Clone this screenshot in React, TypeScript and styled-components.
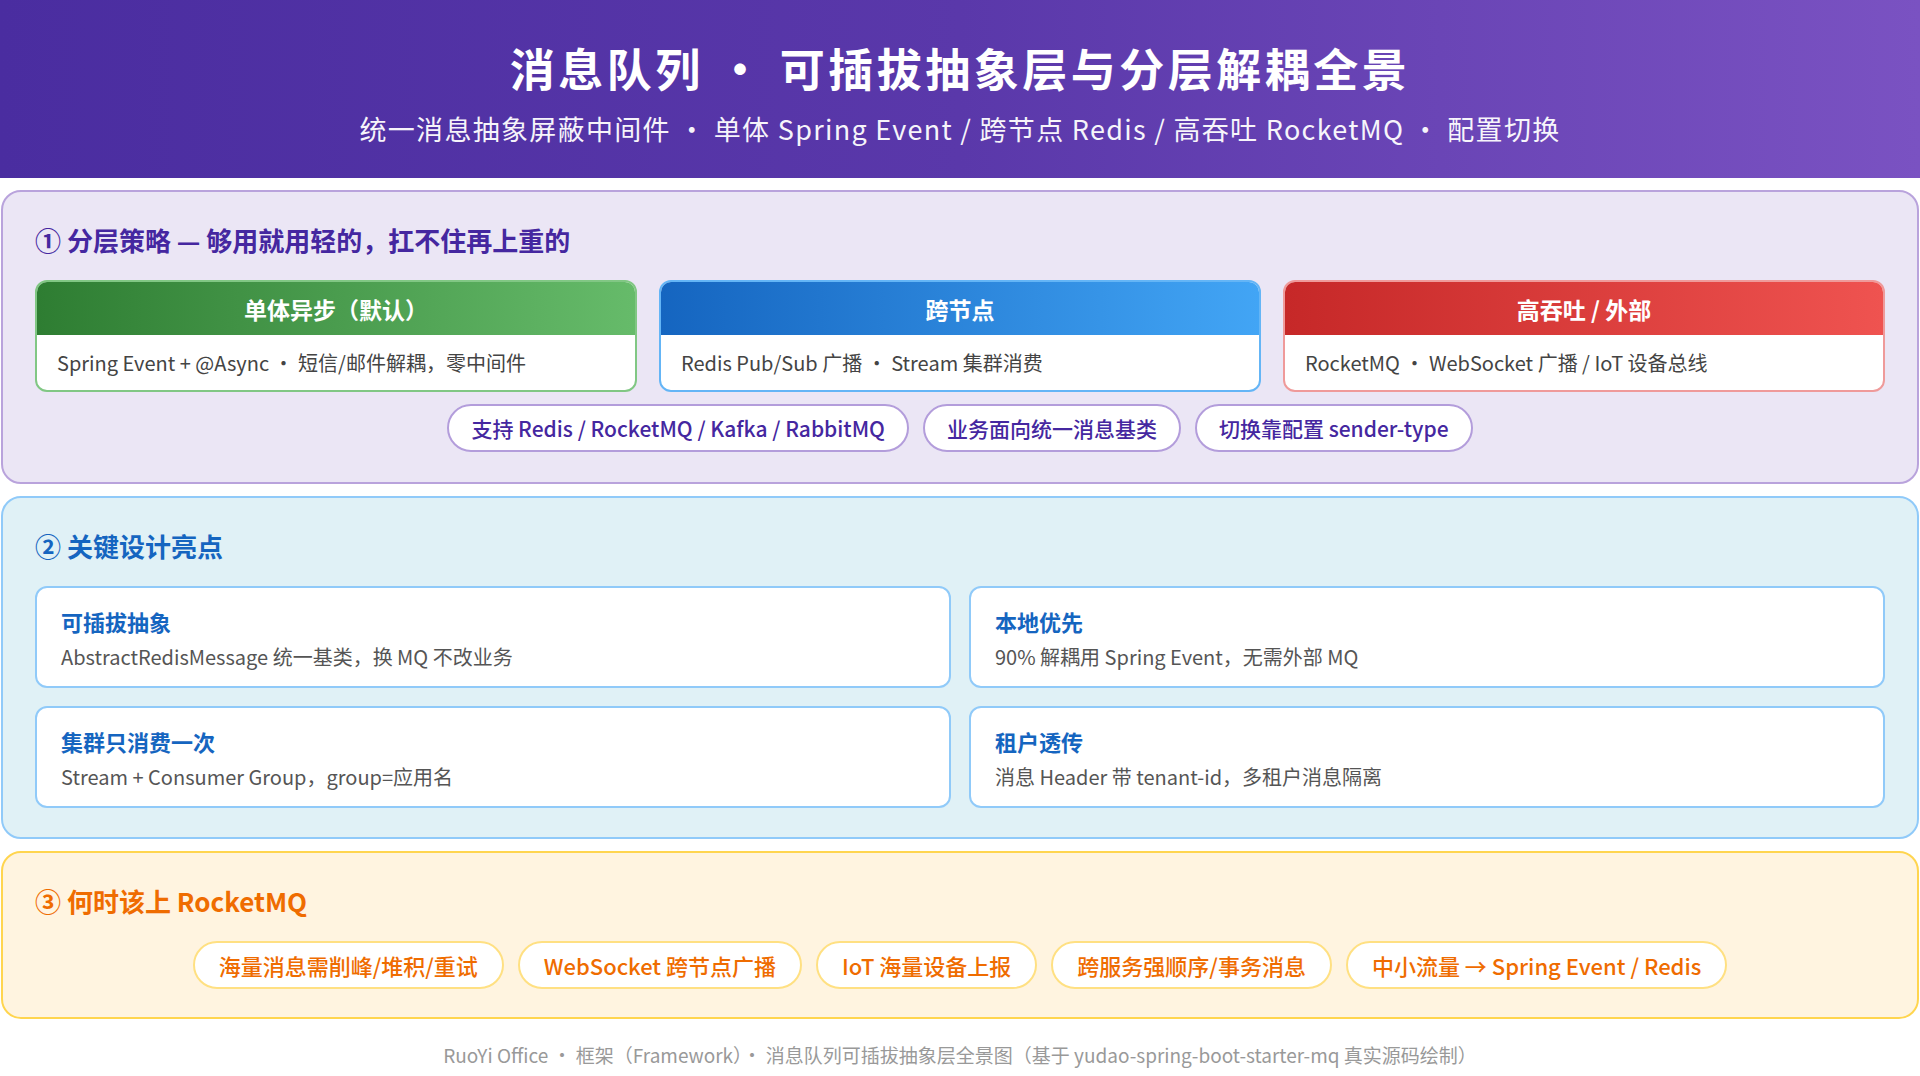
import React from "react";
import styled, { createGlobalStyle } from "styled-components";

const Global = createGlobalStyle`
  html, body { margin: 0; padding: 0; background: #fff; }
  body { font-family: "Noto Sans CJK SC", "Noto Sans", sans-serif; }
`;

const Page = styled.div`
  width: 1920px; height: 1076px; display: flex; flex-direction: column; overflow: hidden;
`;
const Header = styled.header`
  height: 178px; box-sizing: border-box; padding-top: 40px;
  background: linear-gradient(90deg, #4a2da0 0%, #5a38aa 50%, #7a52c2 100%);
  color: #fff; text-align: center;
`;
const Title = styled.h1`
  margin: 0; font-size: 45px; font-weight: 700; letter-spacing: 3.5px; line-height: 56px;
`;
const Sub = styled.div`
  margin-top: 16px; font-size: 27px; letter-spacing: 1.3px; opacity: 0.95; line-height: 34px;
`;
const Section = styled.section<{ $bg: string; $bd: string; $h: number }>`
  margin: 12px 1px 0; border: 2px solid ${p => p.$bd}; background: ${p => p.$bg};
  border-radius: 20px; padding: 30px 32px 24px; box-sizing: border-box; height: ${p => p.$h}px;
  display: flex; flex-direction: column;
`;
const STitle = styled.h2<{ $c: string }>`
  margin: 0 0 22px; font-size: 26px; font-weight: 700; color: ${p => p.$c}; line-height: 36px;
`;
const Tiers = styled.div`display: grid; grid-template-columns: repeat(3, 1fr); gap: 22px;`;
const Tier = styled.div<{ $bd: string }>`
  border: 2px solid ${p => p.$bd}; border-radius: 12px; overflow: hidden; background: #fff;
`;
const TierHead = styled.div<{ $g: string }>`
  height: 53px; display: flex; align-items: center; justify-content: center;
  background: ${p => p.$g}; color: #fff; font-size: 23px; font-weight: 700;
`;
const TierBody = styled.div`
  height: 55px; display: flex; align-items: center; padding: 0 20px; font-size: 20px; color: #444;
`;
const Pills = styled.div<{ $mt: number }>`
  display: flex; justify-content: center; gap: 14px; margin-top: ${p => p.$mt}px;
`;
const Pill = styled.span<{ $c: string; $bd: string }>`
  height: 48px; box-sizing: border-box; padding: 0 22px; display: flex; align-items: center;
  border: 2px solid ${p => p.$bd}; border-radius: 24px; background: #fff; color: ${p => p.$c};
  font-size: 21px; font-weight: 500;
`;
const BigPill = styled(Pill)`font-size: 22px; padding: 0 24px;`;
const Grid = styled.div`display: grid; grid-template-columns: 1fr 1fr; gap: 18px;`;
const Card = styled.div`
  height: 102px; box-sizing: border-box; background: #fff; border: 2px solid #90caf9;
  border-radius: 12px; padding: 18px 24px;
`;
const CT = styled.div`font-size: 22px; font-weight: 700; color: #1565c0; line-height: 30px;`;
const CD = styled.div`font-size: 20px; color: #555; margin-top: 6px; line-height: 30px;`;
const Footer = styled.div`
  text-align: center; color: #999; font-size: 19px; margin-top: 22px;
`;

export default function App() {
  return (
    <Page>
      <Global />
      <Header>
        <Title>消息队列 · 可插拔抽象层与分层解耦全景</Title>
        <Sub>统一消息抽象屏蔽中间件 · 单体 Spring Event / 跨节点 Redis / 高吞吐 RocketMQ · 配置切换</Sub>
      </Header>
      <Section $bg="#ebe6f5" $bd="#b9a3dc" $h={294}>
        <STitle $c="#4527a0">① 分层策略 — 够用就用轻的，扛不住再上重的</STitle>
        <Tiers>
          <Tier $bd="#81c784">
            <TierHead $g="linear-gradient(90deg,#2e7d32,#66bb6a)">单体异步（默认）</TierHead>
            <TierBody>Spring Event + @Async · 短信/邮件解耦，零中间件</TierBody>
          </Tier>
          <Tier $bd="#64b5f6">
            <TierHead $g="linear-gradient(90deg,#1565c0,#42a5f5)">跨节点</TierHead>
            <TierBody>Redis Pub/Sub 广播 · Stream 集群消费</TierBody>
          </Tier>
          <Tier $bd="#ef9a9a">
            <TierHead $g="linear-gradient(90deg,#c62828,#ef5350)">高吞吐 / 外部</TierHead>
            <TierBody>RocketMQ · WebSocket 广播 / IoT 设备总线</TierBody>
          </Tier>
        </Tiers>
        <Pills $mt={12}>
          <Pill $c="#4527a0" $bd="#b39ddb">支持 Redis / RocketMQ / Kafka / RabbitMQ</Pill>
          <Pill $c="#4527a0" $bd="#b39ddb">业务面向统一消息基类</Pill>
          <Pill $c="#4527a0" $bd="#b39ddb">切换靠配置 sender-type</Pill>
        </Pills>
      </Section>
      <Section $bg="#e0f1f6" $bd="#90caf9" $h={343}>
        <STitle $c="#1565c0">② 关键设计亮点</STitle>
        <Grid>
          <Card><CT>可插拔抽象</CT><CD>AbstractRedisMessage 统一基类，换 MQ 不改业务</CD></Card>
          <Card><CT>本地优先</CT><CD>90% 解耦用 Spring Event，无需外部 MQ</CD></Card>
          <Card><CT>集群只消费一次</CT><CD>Stream + Consumer Group，group=应用名</CD></Card>
          <Card><CT>租户透传</CT><CD>消息 Header 带 tenant-id，多租户消息隔离</CD></Card>
        </Grid>
      </Section>
      <Section $bg="#fff4e0" $bd="#ffd54f" $h={168}>
        <STitle $c="#ef6c00">③ 何时该上 RocketMQ</STitle>
        <Pills $mt={0}>
          <BigPill $c="#ef6c00" $bd="#ffe082">海量消息需削峰/堆积/重试</BigPill>
          <BigPill $c="#ef6c00" $bd="#ffe082">WebSocket 跨节点广播</BigPill>
          <BigPill $c="#ef6c00" $bd="#ffe082">IoT 海量设备上报</BigPill>
          <BigPill $c="#ef6c00" $bd="#ffe082">跨服务强顺序/事务消息</BigPill>
          <BigPill $c="#ef6c00" $bd="#ffe082">中小流量 → Spring Event / Redis</BigPill>
        </Pills>
      </Section>
      <Footer>RuoYi Office · 框架（Framework）· 消息队列可插拔抽象层全景图（基于 yudao-spring-boot-starter-mq 真实源码绘制）</Footer>
    </Page>
  );
}
